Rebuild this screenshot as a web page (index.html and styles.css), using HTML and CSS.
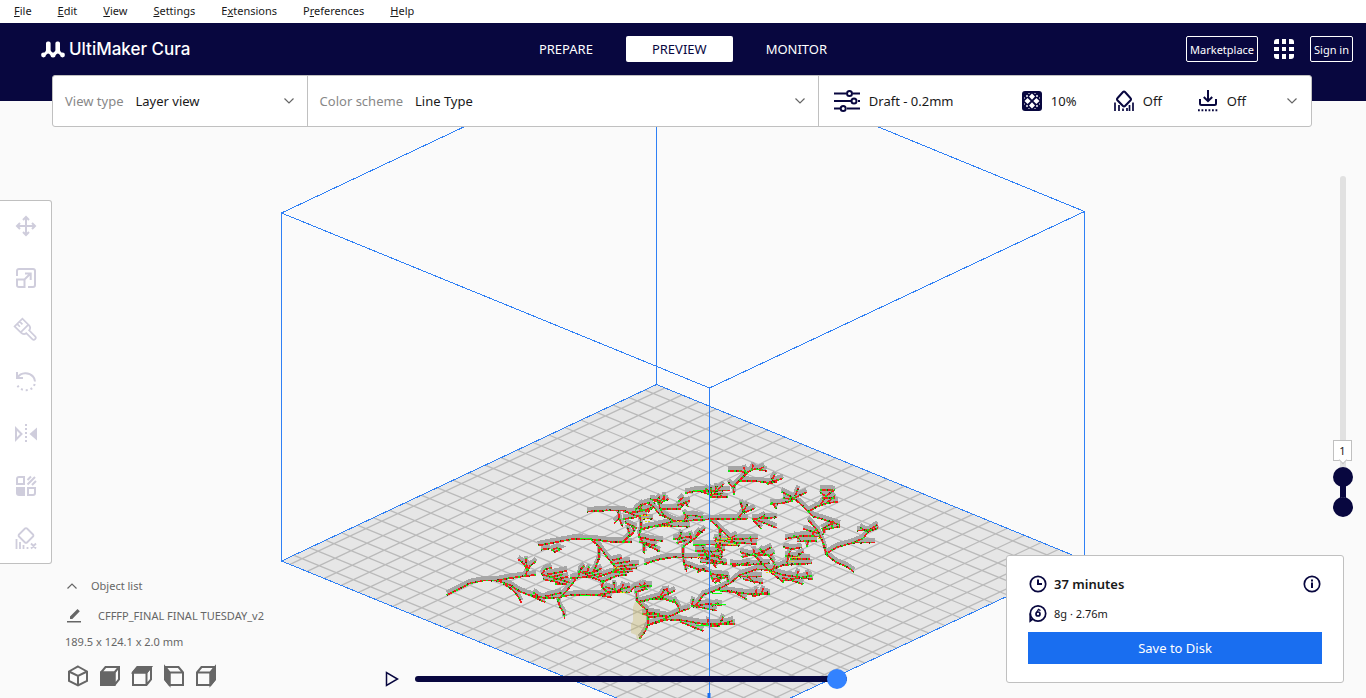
FILE: index.html
```html
<!DOCTYPE html>
<html lang="en">
<head>
<meta charset="utf-8">
<meta name="viewport" content="width=device-width, initial-scale=1">
<title>UltiMaker Cura</title>
<link rel="stylesheet" href="styles.css">
</head>
<body>
<svg width="0" height="0" class="defs" aria-hidden="true">
  <symbol id="chevron" viewBox="0 0 12 12"><path d="M1.500 3.500 6 8l4.500-4.500" fill="none" stroke="currentColor" stroke-width="1.200"/></symbol>
</svg>

<svg class="scene" viewBox="0 0 1366 698" preserveAspectRatio="xMidYMid slice" aria-label="Build plate preview">
  <defs>
    <g id="coral-west">
      <path d="M50 465 85 448 120 430 160 422 200 422 240 414 290 408 318 404M285 408 292 392 282 372 265 358M292 390 287 355M292 392 300 378 318 364"/>
      <path d="M200 422 240 435 270 455 300 466 330 480 346 487M220 430 250 452 265 470 274 488M300 465 350 475 390 472 400 468M310 458l14 8M400 468 450 464 510 465 545 473M500 464 540 460M345 470 395 458"/>
      <path d="M384 480 390 500 402 520 404 536M384 480 412 450 432 425 440 412"/>
      <path d="M335 405 345 388 365 383M335 403 375 415 420 428M350 404 412 392M360 412 400 403M370 420 415 410M340 418 390 428M375 432H410"/>
      <path d="M420 415 480 410 520 425M445 410 452 388 462 378M455 395 485 400 515 385M470 410 515 400M477 380 470 400M445 395l30 8"/>
      <path d="M484 402 495 385 507 355 508 320 485 300M508 320 530 350 555 380 570 400"/>
      <path d="M323 317 370 308 430 297 485 298 540 305 607 307M333 329 360 325M365 330 380 324 392 328 375 336z"/>
      <path d="M545 362 575 354M550 372 600 364M560 380 628 373M550 390 620 385M580 397 590 380M500 412 545 397 610 394M520 425 560 407 590 405"/>
      <path d="M520 425 515 440 530 455 600 458M525 440 560 452 600 440M555 450 552 427M575 450 580 432M600 455 615 440 665 437M615 457 650 447 627 432M640 440 645 428"/>
      <path d="M619 452 621 485 650 510 655 550 645 575 628 598M621 487 660 478 700 478M655 555 700 542 720 538M635 522H680M650 532 710 528"/>
      <path d="M470 215 530 211 580 212 620 228 650 225M565 215 568 235 552 250M568 235 578 260M580 237 620 232M585 247 620 265M580 305 600 285 592 262M600 290 612 275 608 255"/>
      <path d="M630 225 634 265 627 285 640 310 644 342M634 268 660 260 720 255M625 290 665 300 700 303M640 310 690 335M627 305 680 318"/>
      <path d="M615 210 640 190M620 203 655 215 670 197M650 187 670 200 690 225 720 237M690 210 720 205M665 178 685 187 705 172M640 236H670M643 372 680 360 720 352M630 210 634 195M600 218 640 212"/>
    </g>
    <g id="coral-east">
      <path d="M265 93 300 92 320 100M282 165 280 140 300 120 325 95 345 87 380 93M315 95 312 82M335 90 340 74M355 90 372 80M300 123 350 124 385 128 430 115M380 133l30-8M395 120 405 104M282 145 265 128"/>
      <path d="M135 160 165 153 230 153 250 133M185 155 210 165 250 160M205 165 215 142M210 172H265M230 138 222 165M225 152H270M195 145l20 15M238 160l8 12"/>
      <path d="M5 195 30 187M10 210 40 205M30 178 55 182 60 205 70 225 95 240 110 245M60 190 85 177M60 207 120 207 135 187 145 200M110 197 150 182M40 190 60 170M72 185V165M115 185l15-14"/>
      <path d="M0 270 50 257 100 245 210 238 325 236M45 258 150 260M130 245 140 227 165 227 190 232M130 217 145 235M295 234 310 215 303 187M310 215 322 192M312 218 345 205"/>
      <path d="M335 237 412 232M340 240 365 268M350 240 410 264M355 237 375 226M210 240 235 262 265 290 290 315M238 262 242 300 235 330"/>
      <path d="M232 300 300 310M260 297 355 295M265 307 350 312M330 290 335 305M270 295 290 285M230 290 225 305M225 315 300 317"/>
      <path d="M100 297 150 290M130 320 165 295 195 267M115 300 125 277M165 290 180 272M110 310 140 300M130 320 130 355 140 395M130 372 180 390 210 395M170 398 195 385M150 280 155 300"/>
      <path d="M15 372 50 360 100 352 180 353 260 370M165 332 220 335 255 330M175 345 250 350M160 315 230 313M190 330 215 365 230 385M180 367 260 372M215 340 245 360M195 345 190 322M240 345 250 330M210 330 200 360M225 320 245 325"/>
      <path d="M210 402 260 407 265 425M215 417 265 412M225 430 250 402M240 430 230 402M210 395 220 425"/>
      <path d="M345 345 340 327M300 337 345 348 390 395 432 428M305 352 340 342M345 345 395 322M350 345 385 345 403 370M360 327l20 20M270 372 320 375 390 370M275 380 330 367M385 350l18-12"/>
      <path d="M165 500 190 465 230 450 270 430 300 405 350 388 390 390 430 375 515 370M430 322 460 327 485 322M435 347 470 350 490 335M440 370 450 332M460 360 480 340M450 357 510 357M400 392l5-20"/>
      <path d="M390 393 430 405 520 418M425 412 490 433M430 422 515 407M470 407 475 393M505 410 500 397M300 410 365 410M310 418 370 430M320 407 345 430"/>
      <path d="M225 450 280 455 320 478M240 452 330 462 390 462M335 470 385 457M345 465 350 447M365 460 370 444M155 500 160 477M158 500 200 492 245 495M170 500 230 512M215 498 235 488"/>
      <path d="M25 555 70 538 120 515 150 505M70 538 120 540 190 552 285 552M120 545 190 573M200 555 205 538M235 562 250 530M245 552 280 542M185 555 240 560"/>
      <path d="M0 485 60 470 110 490 120 512M60 470 75 447M65 470 105 452M0 442 35 437M70 477 105 487M20 517 60 522M20 532 75 527M85 460 80 445M100 478l8 10"/>
      <path d="M505 215 480 190 460 175 430 157M460 175 500 157M465 170 475 144M390 192 425 190 460 182M395 187l15 20M430 175 460 177M445 165l-20-10"/>
      <path d="M505 215 530 200 560 190 595 185M540 197 560 167 585 149M560 170 540 157M560 190 585 167M545 175H585M540 150H580M505 215 520 230 550 238 580 248 600 255M575 260 580 242M545 268 575 250"/>
      <path d="M560 345 550 310 535 275 505 240M535 280 490 267M545 270 600 260M540 290 490 287 435 297M530 302 470 305M460 287 480 297M500 320 505 302M550 285 555 262M515 290 525 270"/>
      <path d="M560 340 590 322 640 308 670 295M640 308H705M670 295 685 275 715 264M680 275 660 262M650 272 700 270M690 270 712 254M560 345 590 368 620 380 642 396"/>
    </g>
  </defs>

  <g class="volume">
    <path d="M281.500 213 656.500 36 1084.500 211.500V560M281.500 213V561M656.500 36V384.500M281.500 213 709.500 388 1084.500 211.500"/>
  </g>
  <path class="plate" d="M656.500 384.500 1084.500 560 709.500 736 281.500 561z"/>
  <path class="grid" id="grid" transform="matrix(17.120 7.020 -15.960 7.510 683 560.300)"/>
  <path class="edge" d="M656.500 384.500 1084.500 560 709.500 736 281.500 561z"/>

  <g class="model">
    <g class="shade">
      <use href="#coral-west" transform="translate(430 437.500) scale(.3333)"/>
      <use href="#coral-east" transform="translate(640 437.500) scale(.3333)"/>
    </g>
    <g class="wall">
      <use href="#coral-west" transform="translate(430 440) scale(.3333)"/>
      <use href="#coral-east" transform="translate(640 440) scale(.3333)"/>
    </g>
    <g class="dark">
      <use href="#coral-west" transform="translate(430 440) scale(.3333)"/>
      <use href="#coral-east" transform="translate(640 440) scale(.3333)"/>
    </g>
    <g class="inner">
      <use href="#coral-west" transform="translate(430 440) scale(.3333)"/>
      <use href="#coral-east" transform="translate(640 440) scale(.3333)"/>
    </g>
    <path class="skin" d="M641 515h8M642 518h6M645 521h5M662 526h8M677 521h5M716 541h10M722 538h10M728 544h8M792 557h8M789 561h6M766 572h8M709 493h6M818 538h4M614 567h5M620 592h6M697 557h4"/>
    <path class="travel" d="M693 544.500h12M712 604.500h14M696 625.500h14M712 593.500h10M580 538.500h10M580 595.500h10M716 590.500h10M693 490.500h10"/>
  </g>
  <path class="nozzle" d="M635 602h6l3 3v6l2 2v10l-1 8-4 8h-4l-1-4-5-2v-9l2-3v-14z"/>
  <path class="volume" d="M709.500 388V736"/>
  <path class="origin" d="M707.500 693h3v40h-3z"/>
</svg>

<div class="app">
  <nav class="menubar" aria-label="Main menu">
    <button><u>F</u>ile</button><button><u>E</u>dit</button><button><u>V</u>iew</button><button><u>S</u>ettings</button><button>E<u>x</u>tensions</button><button>P<u>r</u>eferences</button><button><u>H</u>elp</button>
  </nav>

  <header class="header">
    <a class="brand" href="#">
      <svg viewBox="0 0 24 17" width="24" height="17" fill="#fff" aria-hidden="true">
        <path d="M5 2.300A1.800 1.800 0 0 1 6.800.5h1A1.800 1.800 0 0 1 9.600 2.300V9c0 .8.400 1.300 1 1.800l1.400 1.400 1.400-1.400c.6-.5 1-1 1-1.800V2.300A1.800 1.800 0 0 1 16.200.5h1A1.800 1.800 0 0 1 19 2.300V9c0 .8.300 1.400 1 2l1.500 1.500-2 2-1.600-1.500c-.7-.7-1.400-.7-2.100 0L12 16.300 8.200 13c-.7-.7-1.400-.7-2.100 0l-1.600 1.500-2-2L4 11c.7-.6 1-1.200 1-2z"/>
        <circle cx="2.500" cy="14" r="2.400"/><circle cx="12" cy="14" r="2.500"/><circle cx="21.500" cy="14" r="2.400"/>
      </svg>
      <span>UltiMaker Cura</span>
    </a>
    <nav class="stages" aria-label="Stages">
      <button>PREPARE</button><button class="active">PREVIEW</button><button>MONITOR</button>
    </nav>
    <div class="account">
      <button class="outlined">Marketplace</button>
      <button class="apps" aria-label="Applications">
        <svg viewBox="0 0 20 20" width="20" height="20" fill="#fff"><path d="M0 5V3a3 3 0 0 1 3-3h2v5zM8 0h4v5H8zM15 0h2a3 3 0 0 1 3 3v2h-5zM0 8h5v4H0zM8 8h4v4H8zM15 8h5v4h-5zM0 15h5v5H3a3 3 0 0 1-3-3zM8 15h4v5H8zM15 15h5v2a3 3 0 0 1-3 3h-2z"/></svg>
      </button>
      <button class="outlined">Sign in</button>
    </div>
  </header>

  <section class="stagebar">
    <div class="field">
      <label for="view">View type</label>
      <select id="view"><option>Layer view</option><option>X-Ray view</option></select>
      <svg width="12" height="12"><use href="#chevron"/></svg>
    </div>
    <div class="field">
      <label for="scheme">Color scheme</label>
      <select id="scheme"><option>Line Type</option><option>Material Color</option></select>
      <svg width="12" height="12"><use href="#chevron"/></svg>
    </div>
    <button class="setup">
      <span class="profile">
        <svg viewBox="0 0 26 22" width="26" height="22" fill="none" stroke="#08073f" stroke-width="2"><path d="M0 3.500h12M19 3.500h7M0 11h17M24 11h2M0 18.500h6M13 18.500h13"/><circle cx="15.500" cy="3.500" r="2.500"/><circle cx="20" cy="11" r="2.500"/><circle cx="9.200" cy="18.500" r="2.500"/></svg>
        Draft - 0.2mm
      </span>
      <span class="stat">
        <svg viewBox="0 0 20 20" width="20" height="20"><rect width="20" height="20" rx="3" fill="#08073f"/><g fill="#fff"><path d="M10 2.500 13 5.600 10 8.700 7 5.600zM5.600 7 8.700 10 5.600 13 2.500 10zM14.400 7 17.500 10 14.400 13 11.300 10zM10 11.300 13 14.400 10 17.500 7 14.400z"/><path d="M5 3.800 6.200 5 5 6.200 3.800 5zM15 3.800 16.200 5 15 6.200 13.800 5zM5 13.800 6.200 15 5 16.200 3.800 15zM15 13.800 16.200 15 15 16.200 13.800 15z"/><path d="M6 2h2L7 3zM12 2h2l-1 1zM6 18h2l-1-1zM12 18h2l-1-1zM2 6v2l1-1zM2 12v2l1-1zM18 6v2l-1-1zM18 12v2l-1-1z"/></g></svg>
        10%
      </span>
      <span class="stat">
        <svg viewBox="0 0 20 22" width="20" height="22" fill="none" stroke="#08073f" stroke-width="2"><path d="M9 2a1.400 1.400 0 0 1 2 0l5.600 6.200a1.400 1.400 0 0 1 0 2L11 16a1.400 1.400 0 0 1-2 0l-5.600-5.800a1.400 1.400 0 0 1 0-2z"/><path d="M1 12.500V21M5 15v6M9 18.500V21M13 18v3M15.500 15v6M19 12.500V21" stroke-width="1.700"/></svg>
        Off
      </span>
      <span class="stat">
        <svg viewBox="0 0 20 22" width="20" height="22" fill="none" stroke="#08073f" stroke-width="2"><path d="M10 0v11M5.800 7 10 11.200 14.200 7M2 9v4.500c0 1 .5 1.500 1.500 1.500h13c1 0 1.500-.5 1.500-1.500V9"/><path d="M0 20.200h20" stroke-dasharray="1.800 1.700"/></svg>
        Off
      </span>
      <svg class="open" width="12" height="12"><use href="#chevron"/></svg>
    </button>
  </section>

  <main class="workspace">
    <div class="left">
      <div class="tools">
        <button aria-label="Move"><svg viewBox="0 0 22 22"><path d="M11 2v18M2 11h18M8 5l3-3 3 3M8 17l3 3 3-3M5 8l-3 3 3 3M17 8l3 3-3 3"/></svg></button>
        <button aria-label="Scale"><svg viewBox="0 0 22 22"><path d="M2 9V4c0-1.300.7-2 2-2h14c1.300 0 2 .7 2 2v14c0 1.300-.7 2-2 2h-5M2 12.500h7.500V20H4c-1.300 0-2-.7-2-2zM9.500 12.500 15.500 6.500M10 6.500h5.700V13"/></svg></button>
        <button aria-label="Paint"><svg viewBox="0 0 22 22"><g transform="translate(1 1) rotate(-45 11 11)" stroke-width="1.700"><path d="M5.500-1h11v8.500h-11zM5.500 7.500c0 3 1 4.500 3.500 4.500v8.500a2 2 0 0 0 4 0V12c2.500 0 3.500-1.500 3.500-4.500M9-1v4M12.500-1v4"/></g></svg></button>
        <button aria-label="Rotate"><svg viewBox="0 0 22 22"><path d="M2 1v6h6M2.500 6.500C6 1 14 1 18 5.500c1.500 1.700 2 3.300 2 5"/><path d="M19.700 13c-2 8-15 9-18.400-1" stroke-dasharray="2 2.900"/></svg></button>
        <button aria-label="Mirror"><svg viewBox="0 0 22 22"><path d="M1 5.500v11L6.500 11z"/><path d="M11 1v20" stroke-dasharray="2 2"/><path d="M22 4.500v13L14.500 11z" fill="#cfcddc" stroke="none"/></svg></button>
        <button aria-label="Per model settings"><svg viewBox="0 0 22 22"><path d="M2 9V4c0-1.300.7-2 2-2h5v7zM13 13h7v5c0 1.300-.7 2-2 2h-5z"/><path d="M1 12h9v9H4c-2 0-3-1-3-3z" fill="#cfcddc" stroke="none"/><path d="M12.500 5 16 1.500M12.500 9.500l7.500-7.500M17 10l4-4"/></svg></button>
        <button aria-label="Support blocker"><svg viewBox="0 0 22 22"><path d="M10 1.500a1.400 1.400 0 0 1 2 0l6 6a1.400 1.400 0 0 1 0 2l-6 6a1.400 1.400 0 0 1-2 0l-6-6a1.400 1.400 0 0 1 0-2zM1.500 12v10M5 15v7M8.500 18v4M12.500 20v2M16 16.500l5 5M21 16.500l-5 5" stroke-width="1.800"/></svg></button>
      </div>
      <div class="objects">
        <button class="row"><svg class="up" width="12" height="12"><use href="#chevron"/></svg>Object list</button>
        <button class="row name"><svg width="16" height="16" viewBox="0 0 16 16" fill="#666"><path d="M1 13h14v1.600H1zM4 8.500 11.500 1l2.300 2.300L6.300 11H4z"/></svg>CFFFP_FINAL FINAL TUESDAY_v2</button>
        <p>189.5 x 124.1 x 2.0 mm</p>
        <div class="cameras">
          <button aria-label="3D view"><svg viewBox="0 0 22 22"><path d="M11 1.500 20 6.500v9.500l-9 4.500-9-4.500V6.500zM2 6.500l9 4.500 9-4.500M11 11v9.500"/></svg></button>
          <button aria-label="Front view"><svg viewBox="0 0 22 22"><path d="M2 7.500 6.500 2H20v12.500L15.500 20H2zM2 7.500h13.500V20M15.500 7.500 20 2"/><path d="M2 7.500h13.500V20H2z" fill="#666"/></svg></button>
          <button aria-label="Top view"><svg viewBox="0 0 22 22"><path d="M2 7.500 6.500 2H20v12.500L15.500 20H2zM2 7.500h13.500V20M15.500 7.500 20 2"/><path d="M2 7.500 6.500 2H20l-4.500 5.500z" fill="#666"/></svg></button>
          <button aria-label="Left view"><svg viewBox="0 0 22 22"><path d="M20 7.500 15.500 2H2v12.500L6.500 20H20zM20 7.500H6.500V20M6.500 7.500 2 2"/><path d="M2 2v12.500L6.500 20V7.500z" fill="#666"/></svg></button>
          <button aria-label="Right view"><svg viewBox="0 0 22 22"><path d="M2 7.500 6.500 2H20v12.500L15.500 20H2zM2 7.500h13.500V20M15.500 7.500 20 2"/><path d="M20 2v12.500L15.500 20V7.500z" fill="#666"/></svg></button>
        </div>
      </div>
    </div>

    <div class="playback">
      <button aria-label="Play"><svg width="14" height="16" viewBox="0 0 14 16"><path d="M1.500 1.500v13L12.500 8z" fill="none" stroke="#08073f" stroke-width="1.500"/></svg></button>
      <input type="range" aria-label="Path position" min="0" max="100" value="100">
    </div>

    <div class="right">
      <div class="layers">
        <input type="range" class="upper" aria-label="Top layer" min="1" max="10" value="1">
        <span class="link"></span>
        <input type="range" class="lower" aria-label="Bottom layer" min="1" max="10" value="1">
        <output>1</output>
      </div>
      <section class="action">
        <div class="line">
          <svg width="20" height="20" viewBox="0 0 20 20" fill="none" stroke="#08073f" stroke-width="1.700"><circle cx="10" cy="10" r="7.700"/><path d="M10 5.500V10h4" stroke-width="2"/></svg>
          <strong>37 minutes</strong>
          <button aria-label="Print details"><svg width="20" height="20" viewBox="0 0 20 20" fill="none" stroke="#08073f" stroke-width="1.700"><circle cx="10" cy="10" r="7.700"/><path d="M10 8.500V14M10 5.500v2" stroke-width="2"/></svg></button>
        </div>
        <div class="line">
          <svg width="20" height="20" viewBox="0 0 20 20" fill="none" stroke="#08073f" stroke-width="1.700"><circle cx="10" cy="9.500" r="7.700"/><path d="M2.200 9.500V17l2.600-2"/><circle cx="10" cy="10" r="2"/><path d="M8.500 8.500 10.500 5.300l2 1.300" stroke-width="1.300"/></svg>
          <span>8g · 2.76m</span>
        </div>
        <button class="save">Save to Disk</button>
      </section>
    </div>
  </main>
</div>
<script src="scene.js"></script>
</body>
</html>
```
FILE: scene.js
```js
// Grid lines every 10 mm, measured from the centre of a 250 x 235 mm plate.
const halfWidth = 12.5;
const halfDepth = 11.75;
let lines = "";
for (let i = -12; i <= 12; i++) lines += `M${i} ${-halfDepth}V${halfDepth}`;
for (let j = -11; j <= 11; j++) lines += `M${-halfWidth} ${j}H${halfWidth}`;
document.getElementById("grid").setAttribute("d", lines);
```
FILE: styles.css
```css
* { box-sizing: border-box; }
body {
  margin: 0;
  background: #fafafa;
  color: #191919;
  font: 13px/18px "Noto Sans", sans-serif;
}
button {
  margin: 0;
  padding: 0;
  border: 0;
  background: none;
  color: inherit;
  font: inherit;
  cursor: pointer;
}
svg { display: block; flex: none; }
.defs { position: absolute; }

.scene {
  position: absolute;
  inset: 0;
  width: 100%;
  height: 100vh;
}
.volume, .edge { fill: none; stroke: #2f80f5; stroke-width: 1; shape-rendering: crispEdges; }
.plate { fill: #e6e6e6; }
.grid { fill: none; stroke: #bababa; stroke-width: 1.3px; vector-effect: non-scaling-stroke; }
.origin { fill: #196ef0; }
.model { fill: none; shape-rendering: crispEdges; }
.shade { stroke: #a6a6a6; stroke-width: 13px; }
.wall { stroke: #f01c1c; stroke-width: 5px; }
.dark { stroke: #5a2c10; stroke-width: 6px; stroke-dasharray: 4 17 4 22; }
.inner { stroke: #18e018; stroke-width: 5px; stroke-dasharray: 5 13 4 10; }
.skin { stroke: #e8e010; stroke-width: 1px; stroke-dasharray: 2 1; }
.travel { stroke: #10ff10; stroke-width: 1px; }
.nozzle { fill: #c8b450; fill-opacity: .3; }

.app {
  position: relative;
  display: flex;
  flex-direction: column;
  min-height: 100vh;
}

.menubar {
  display: flex;
  gap: 26px;
  height: 23px;
  padding: 0 0 2px 14px;
  background: #fff;
  font-size: 11px;
}

.header {
  display: grid;
  grid-template-columns: 1fr auto 1fr;
  align-items: start;
  height: 78px;
  padding: 13px 13px 0;
  background: #08073f;
  color: #fff;
}
.brand {
  display: flex;
  align-items: center;
  gap: 4px;
  height: 26px;
  padding-left: 28px;
  color: #fff;
  font: 500 17px/26px Inter, sans-serif;
  text-decoration: none;
}
.stages { display: flex; gap: 7px; }
.stages button { height: 26px; padding: 0 26px; border-radius: 2px; }
.stages .active { background: #fff; color: #08073f; }
.account { display: flex; justify-content: flex-end; align-items: center; gap: 16px; }
.outlined {
  height: 26px;
  padding: 1px 3px 0;
  border: 1px solid #fff;
  border-radius: 2px;
  font-size: 11px;
}

.stagebar {
  display: grid;
  grid-template-columns: 255fr 512fr 493fr;
  height: 52px;
  margin: -26px 54px 0 52px;
  border: 1px solid #c0c0c0;
  border-radius: 3px;
  background: #fff;
}
.field {
  display: flex;
  align-items: center;
  padding: 0 12px;
  border-right: 1px solid #c0c0c0;
  color: #666;
}
.field label { color: #888; margin-right: 12px; }
.field select {
  flex: 1;
  min-width: 0;
  padding: 0;
  border: 0;
  appearance: none;
  background: none;
  color: #191919;
  font: inherit;
}
.setup {
  display: grid;
  grid-template-columns: 188px 92px 84px 1fr auto;
  align-items: center;
  padding: 0 13px 0 15px;
  text-align: left;
}
.profile, .stat { display: flex; align-items: center; gap: 9px; }
.open { color: #666; }

.workspace { display: flex; flex: 1; }
.left {
  display: flex;
  flex-direction: column;
  width: 384px;
  padding-top: 73px;
}
.tools {
  display: flex;
  flex-direction: column;
  width: 52px;
  border: 1px solid #c0c0c0;
  border-left: 0;
  border-radius: 0 3px 3px 0;
  background: #fff;
}
.tools button { display: grid; place-items: center; height: 52px; padding-bottom: 2px; }
.tools svg, .cameras svg { width: 22px; height: 22px; fill: none; stroke: #cfcddc; stroke-width: 2; overflow: visible; }
.tools button:last-child { height: 50px; padding: 0; }
.objects { padding: 7px 0 0 66px; color: #666; font-size: 11px; }
.row { display: flex; align-items: center; gap: 13px; height: 30px; }
.up { transform: rotate(180deg); }
.name { gap: 16px; }
.objects p { margin: 2px 0 14px -1px; }
.cameras { display: flex; gap: 10px; margin-left: 1px; }
.cameras svg { stroke: #666; }

.playback {
  display: flex;
  align-items: center;
  align-self: flex-end;
  gap: 16px;
  width: 463px;
  height: 38px;
  padding-left: 1px;
}
input[type="range"] { margin: 0; appearance: none; background: none; }
.playback input { flex: 1; height: 20px; min-width: 0; }
.playback input::-webkit-slider-runnable-track { height: 6px; border-radius: 3px; background: #08073f; }
.playback input::-webkit-slider-thumb {
  appearance: none;
  width: 20px;
  height: 20px;
  margin-top: -7px;
  border-radius: 50%;
  background: #3282ff;
}

.right {
  display: flex;
  flex-direction: column;
  justify-content: space-between;
  align-items: flex-end;
  margin-left: auto;
  padding: 49px 22px 15px 0;
}
.layers {
  position: relative;
  display: flex;
  flex-direction: column;
  align-items: center;
  width: 20px;
  margin-right: -9px;
}
.layers input { width: 20px; writing-mode: vertical-lr; direction: rtl; }
.layers input::-webkit-slider-runnable-track { width: 6px; border-radius: 3px; background: #e1e1e1; }
.layers input::-webkit-slider-thumb {
  appearance: none;
  width: 20px;
  height: 20px;
  margin-left: -7px;
  border-radius: 50%;
  background: #08073f;
}
.upper { height: 311px; }
.lower { height: 20px; }
.link { width: 6px; height: 14px; margin: -2px 0; background: #08073f; }
.layers output {
  position: absolute;
  bottom: 56px;
  left: 0;
  width: 19px;
  height: 21px;
  border: 1px solid #c0c0c0;
  background: #fff;
  font-size: 11px;
  line-height: 20px;
  text-align: center;
}
.layers output::after {
  content: "";
  position: absolute;
  bottom: -3px;
  left: 6px;
  width: 5px;
  height: 5px;
  border: solid #c0c0c0;
  border-width: 0 1px 1px 0;
  background: #fff;
  transform: rotate(45deg);
}

.action {
  display: flex;
  flex-direction: column;
  width: 338px;
  padding: 13px 21px 18px;
  border: 1px solid #c0c0c0;
  border-radius: 3px;
  background: #fff;
}
.line { display: flex; align-items: center; gap: 6px; height: 30px; font-size: 11px; }
.line strong { flex: 1; font-size: 13px; font-weight: 600; }
.save { height: 32px; margin-top: 3px; background: #196ef0; color: #fff; }
```
